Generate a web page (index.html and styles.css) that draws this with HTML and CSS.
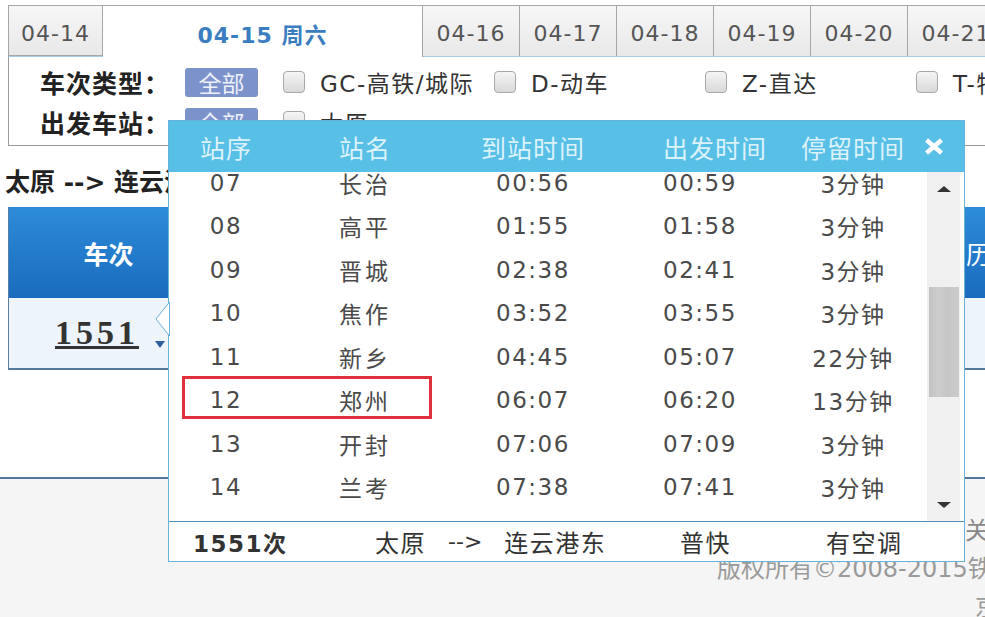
FILE: index.html
```html
<!DOCTYPE html>
<html lang="zh-CN">
<head>
<meta charset="utf-8">
<title>车次查询</title>
<link rel="stylesheet" href="styles.css">
</head>
<body>
<div class="page">
  <div class="tabs">
    <div class="tab first">04-14</div>
    <div class="tab active">04-15 周六</div>
    <div class="tab">04-16</div>
    <div class="tab">04-17</div>
    <div class="tab">04-18</div>
    <div class="tab">04-19</div>
    <div class="tab">04-20</div>
    <div class="tab">04-21</div>
  </div>
  <div class="filter">
    <div class="frow">
      <span class="flabel">车次类型：</span>
      <span class="badge">全部</span>
      <span class="opt"><i class="cb"></i>GC-高铁/城际</span>
      <span class="opt"><i class="cb"></i>D-动车</span>
      <span class="opt"><i class="cb"></i>Z-直达</span>
      <span class="opt"><i class="cb"></i>T-特快</span>
    </div>
    <div class="frow">
      <span class="flabel">出发车站：</span>
      <span class="badge">全部</span>
      <span class="opt"><i class="cb"></i>太原</span>
    </div>
  </div>
  <div class="route">太原 --&gt; 连云港东（4月15日 周六）共计1个车次</div>
  <div class="result">
    <div class="rhead">
      <div class="hc first">车次</div>
      <div class="hc far">历时</div>
    </div>
    <div class="rrow">
      <div class="rc first"><span class="num">1551</span><i class="caret"></i></div>
    </div>
  </div>
  <div class="footer">
    <div class="fl l1">关于我们 | 网站声明</div>
    <div class="fl l2">版权所有©2008-2015铁道部信息技术中心</div>
    <div class="fl l3">京ICP备05020493号</div>
  </div>

  <div class="popup">
    <svg class="notch" width="15" height="34" viewBox="0 0 15 34"><polygon points="14.5,0 1,17 14.5,34" fill="#fff" stroke="#69b2dc" stroke-width="1"/></svg>
    <div class="ph">
      <span>站序</span><span>站名</span><span>到站时间</span><span class="c4">出发时间</span><span>停留时间</span>
      <span class="close"><svg width="20" height="17" viewBox="0 0 20 17"><path d="M2.5 2 L17.5 15 M17.5 2 L2.5 15" stroke="#fff" stroke-width="4.5" fill="none"/></svg></span>
    </div>
    <div class="pbody">
      <div class="plist">
        <div class="rows">
          <div class="prow"><span>07</span><span class="nm">长治</span><span>00:56</span><span class="c4">00:59</span><span>3分钟</span></div>
          <div class="prow"><span>08</span><span class="nm">高平</span><span>01:55</span><span class="c4">01:58</span><span>3分钟</span></div>
          <div class="prow"><span>09</span><span class="nm">晋城</span><span>02:38</span><span class="c4">02:41</span><span>3分钟</span></div>
          <div class="prow"><span>10</span><span class="nm">焦作</span><span>03:52</span><span class="c4">03:55</span><span>3分钟</span></div>
          <div class="prow"><span>11</span><span class="nm">新乡</span><span>04:45</span><span class="c4">05:07</span><span>22分钟</span></div>
          <div class="prow mark"><span>12</span><span class="nm">郑州</span><span>06:07</span><span class="c4">06:20</span><span>13分钟</span></div>
          <div class="prow"><span>13</span><span class="nm">开封</span><span>07:06</span><span class="c4">07:09</span><span>3分钟</span></div>
          <div class="prow"><span>14</span><span class="nm">兰考</span><span>07:38</span><span class="c4">07:41</span><span>3分钟</span></div>
        </div>
      </div>
      <div class="sb">
        <div class="sb-btn"><i class="tri up"></i></div>
        <div class="sb-thumb"></div>
        <div class="sb-btn down"><i class="tri dn"></i></div>
      </div>
    </div>
    <div class="pfoot">
      <span class="tno">1551次</span>
      <span class="froute"><span>太原</span><span class="arrow">--&gt;</span><span>连云港东</span></span>
      <span class="ftype">普快</span>
      <span class="fac">有空调</span>
    </div>
  </div>
</div>
</body>
</html>
```

FILE: styles.css
```css
html, body {
  margin: 0;
  padding: 0;
  width: 985px;
  height: 617px;
  overflow: hidden;
  background: #fff;
}
body {
  font-family: "DejaVu Sans", "Noto Sans CJK SC", sans-serif;
  color: #333;
}
.page {
  position: relative;
  height: 617px;
  display: flex;
  flex-direction: column;
}

/* date tabs */
.tabs {
  display: flex;
  align-items: flex-start;
  padding: 5px 0 0 8px;
  white-space: nowrap;
}
.tab {
  flex: none;
  box-sizing: border-box;
  width: 97px;
  height: 51px;
  padding-top: 5px;
  border: 1px solid #a6a6a6;
  border-left: none;
  border-bottom: none;
  background: linear-gradient(#f7f7f7, #e8e8e8);
  color: #555;
  font-size: 22px;
  letter-spacing: 1px;
  display: flex;
  align-items: center;
  justify-content: center;
}
.tab.first {
  width: 95px;
  border-left: 1px solid #a6a6a6;
  border-bottom: 1px solid #a6a6a6;
}
.tab.active {
  width: 320px;
  height: 52px;
  padding-top: 3px;
  margin-bottom: -1px;
  background: #fff;
  color: #3a7dc0;
  font-weight: bold;
  position: relative;
  z-index: 1;
}

/* filter box */
.filter {
  flex: none;
  box-sizing: border-box;
  margin-left: 8px;
  width: 1100px;
  height: 90px;
  border: 1px solid #9b9b9b;
  border-top-color: #a9cde4;
  padding: 5px 0 0 31px;
}
.frow {
  display: flex;
  align-items: center;
  height: 40px;
  white-space: nowrap;
}
.flabel {
  flex: none;
  width: 145px;
  font-size: 25px;
  font-weight: bold;
  color: #222;
  letter-spacing: 1px;
}
.badge {
  flex: none;
  width: 73px;
  height: 29px;
  margin-right: 25px;
  border-radius: 3px;
  background: #7c92ca;
  color: #eef1fa;
  font-size: 23px;
  display: flex;
  align-items: center;
  justify-content: center;
}
.opt {
  flex: none;
  width: 211px;
  display: flex;
  align-items: center;
  font-size: 23px;
  letter-spacing: 1.5px;
  color: #333;
}
.cb {
  flex: none;
  box-sizing: border-box;
  width: 22px;
  height: 22px;
  margin-right: 15px;
  border: 1px solid #a8a8a8;
  border-radius: 4px;
  background: linear-gradient(#f5f5f5, #d9d9d9);
}

/* route line */
.route {
  flex: none;
  padding: 22px 0 9px 5px;
  line-height: 30px;
  font-size: 25px;
  font-weight: bold;
  color: #222;
  white-space: nowrap;
}

/* result table */
.result {
  flex: none;
  margin-left: 8px;
  width: 1100px;
  border-left: 1px solid #5b7ea3;
}
.rhead {
  height: 91px;
  display: flex;
  align-items: center;
  background: linear-gradient(#2d8cd9, #1a6bbe);
}
.hc {
  color: #fff;
  font-size: 25px;
  font-weight: bold;
  white-space: nowrap;
}
.hc.first {
  flex: none;
  width: 199px;
  text-align: center;
}
.hc.far {
  margin-left: 758px;
  font-weight: normal;
}
.rrow {
  height: 70px;
  display: flex;
  align-items: center;
  background: #eef4fb;
  border-bottom: 2px solid #56789a;
}
.rc.first {
  display: flex;
  align-items: center;
  padding-left: 46px;
}
.num {
  font-family: "Liberation Serif", serif;
  font-weight: bold;
  font-size: 34px;
  letter-spacing: 4px;
  color: #333;
  text-decoration: underline;
}
.caret {
  width: 0;
  height: 0;
  margin: 22px 0 0 16px;
  border-left: 5px solid transparent;
  border-right: 5px solid transparent;
  border-top: 7px solid #2c5f9e;
}

/* footer */
.footer {
  flex: none;
  margin-top: 107px;
  height: 140px;
  border-top: 2px solid #52759a;
  background: #f5f5f5;
  padding-top: 33px;
  box-sizing: border-box;
  color: #9a9a9a;
  font-size: 24px;
  white-space: nowrap;
}
.fl {
  line-height: 38px;
}
.l1 { padding-left: 965px; color: #888; }
.l2 { padding-left: 717px; }
.l3 { padding-left: 975px; }

/* popup */
.popup {
  position: absolute;
  left: 168px;
  top: 120px;
  z-index: 5;
  box-sizing: border-box;
  width: 797px;
  height: 442px;
  border: 1px solid #69b2dc;
  background: #fff;
  display: flex;
  flex-direction: column;
}
.notch {
  position: absolute;
  left: -14px;
  top: 181px;
}
.ph {
  flex: none;
  height: 51px;
  background: #58bfe6;
  display: grid;
  grid-template-columns: 114px 164px 172px 178px 112px 1fr;
  align-items: center;
  text-align: center;
  font-size: 25px;
  letter-spacing: 1px;
  color: #dcf2fb;
  white-space: nowrap;
}
.ph .c4 {
  padding-left: 14px;
}
.close {
  display: flex;
  justify-content: center;
  padding-right: 5px;
}
.pbody {
  flex: none;
  height: 349px;
  display: flex;
  overflow: hidden;
  padding-right: 4px;
}
.plist {
  flex: none;
  width: 758px;
  overflow: hidden;
}
.rows {
  margin-top: -11px;
}
.prow {
  height: 43.5px;
  display: grid;
  grid-template-columns: 114px 164px 172px 178px 112px;
  align-items: center;
  text-align: center;
  font-size: 23px;
  letter-spacing: 1.5px;
  color: #4a4a4a;
  white-space: nowrap;
}
.prow .nm {
  letter-spacing: 3px;
}
.prow .c4 {
  padding-right: 16px;
}
.prow.mark {
  position: relative;
}
.prow.mark::after {
  content: "";
  position: absolute;
  left: 13px;
  top: -3px;
  width: 250px;
  height: 43px;
  box-sizing: border-box;
  border: 3px solid #e0303c;
}

/* scrollbar */
.sb {
  flex: none;
  width: 33px;
  background: #f0f0f0;
  display: flex;
  flex-direction: column;
  align-items: center;
}
.sb-btn {
  flex: none;
  height: 33px;
  width: 100%;
  display: flex;
  align-items: center;
  justify-content: center;
}
.sb-btn.down {
  margin-top: auto;
}
.tri {
  width: 0;
  height: 0;
  border-left: 7px solid transparent;
  border-right: 7px solid transparent;
}
.tri.up { border-bottom: 6px solid #333; }
.tri.dn { border-top: 6px solid #333; }
.sb-thumb {
  flex: none;
  margin-top: 82px;
  width: 30px;
  height: 110px;
  background: linear-gradient(90deg, #c2c2c2, #cdcdcd 30%, #c6c6c6 60%, #cbcbcb);
}

/* popup footer */
.pfoot {
  flex: none;
  height: 39px;
  border-top: 1px solid #4f8cb6;
  display: grid;
  grid-template-columns: 206px 305px 146px 1fr;
  align-items: center;
  font-size: 24px;
  letter-spacing: 1.5px;
  color: #333;
  white-space: nowrap;
}
.tno {
  padding-left: 24px;
  font-weight: bold;
  font-size: 23px;
}
.froute {
  display: flex;
  align-items: center;
  gap: 22px;
}
.arrow {
  font-size: 22px;
  letter-spacing: 0;
}
```
